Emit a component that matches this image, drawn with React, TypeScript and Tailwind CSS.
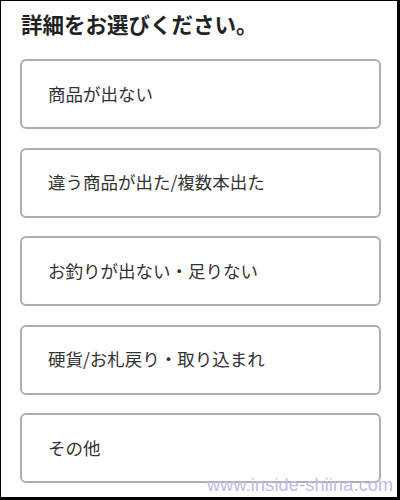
import React from "react";

const items = [
  "商品が出ない",
  "違う商品が出た/複数本出た",
  "お釣りが出ない・足りない",
  "硬貨/お札戻り・取り込まれ",
  "その他",
];

export default function App() {
  return (
    <div
      className="relative w-[400px] h-[500px] bg-white border-l border-t border-r-[3px] border-b-[3px] border-black overflow-hidden"
      style={{ fontFamily: '"Noto Sans CJK JP", "Noto Sans", sans-serif' }}
    >
      <div className="pl-[19px] pr-[16px]">
        <h1 className="pt-[9px] pl-[1px] text-[21.5px] leading-[28px] font-bold text-[#222]">
          詳細をお選びください。
        </h1>
        <div className="mt-[21px] flex flex-col gap-[18.5px]">
          {items.map((t) => (
            <div
              key={t}
              className="h-[70px] border-2 border-[#aeaeae] rounded-[6px] flex items-center pl-[26px] text-[17.5px] text-[#333]"
            >
              {t}
            </div>
          ))}
        </div>
      </div>
      <div
        className="absolute left-[206px] top-[474px] whitespace-nowrap text-[18px] leading-[20px] tracking-[0.2px] text-[#c4b8e8] font-light"
        style={{ fontFamily: '"Liberation Sans", Arial, sans-serif' }}
      >
        www.inside-shiina.com
      </div>
    </div>
  );
}
